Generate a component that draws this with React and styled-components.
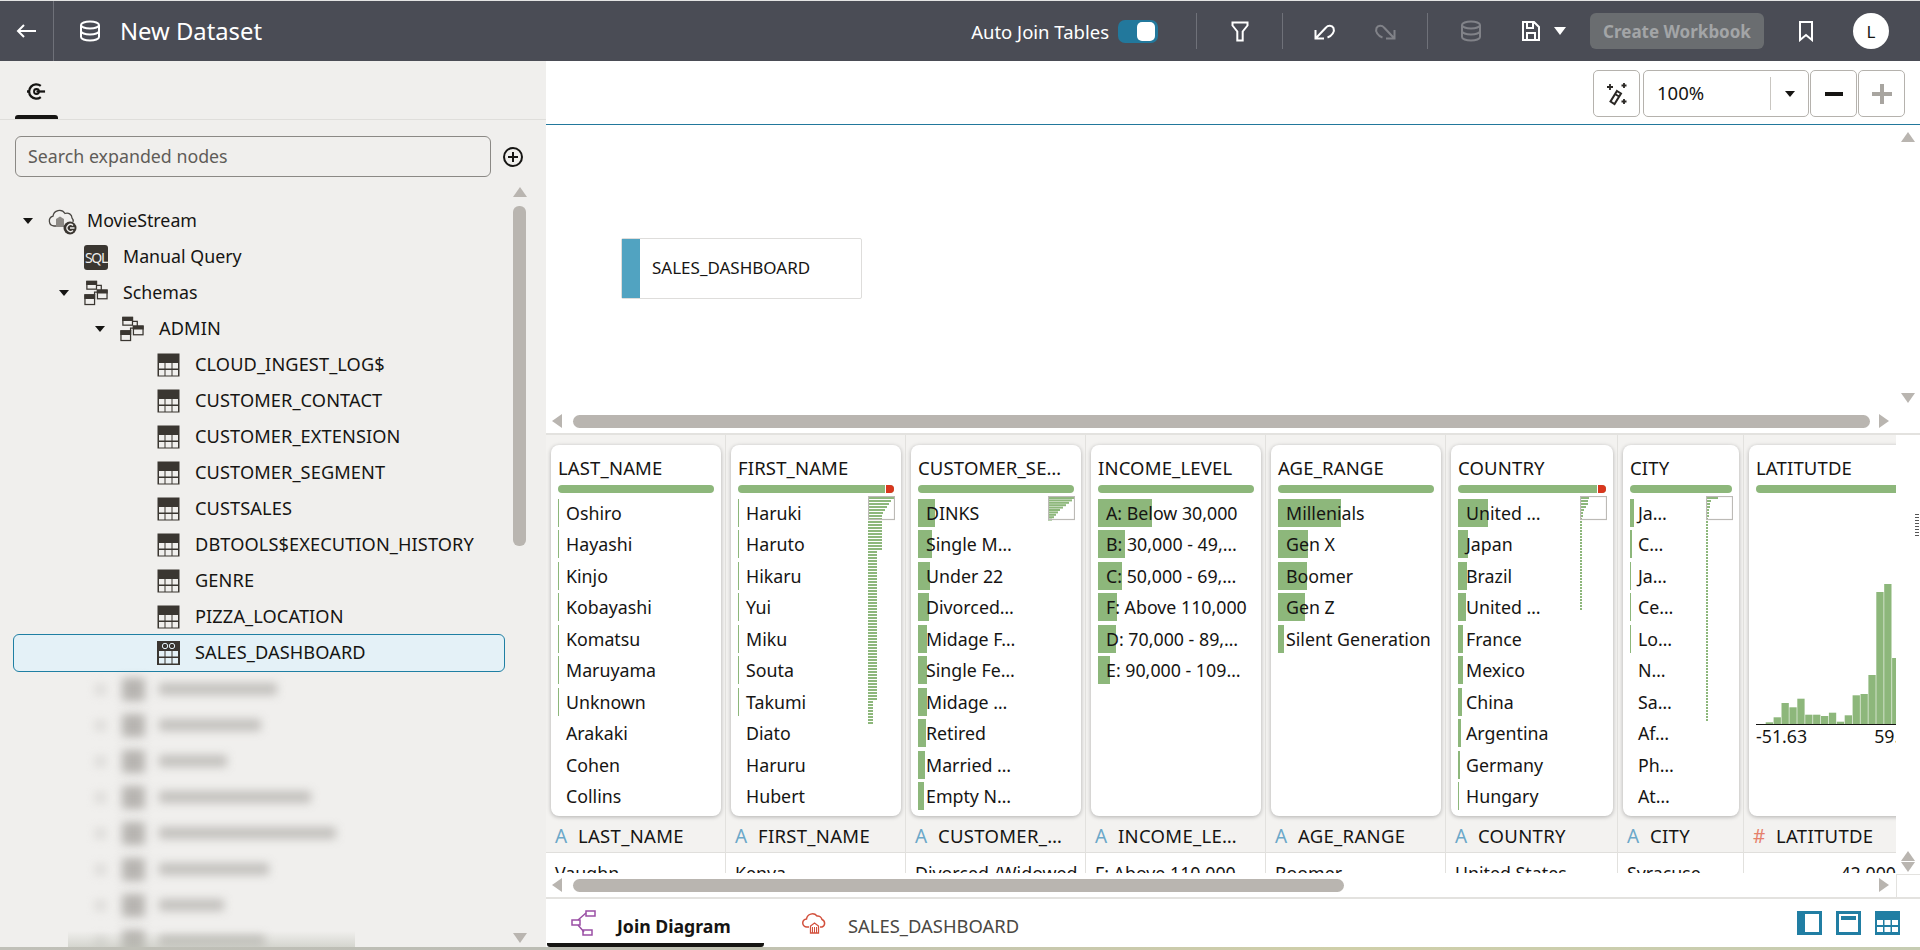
import React from "react"
import styled, { createGlobalStyle } from "styled-components"

const GlobalStyle = createGlobalStyle`
  html, body {
    margin: 0;
    padding: 0;
    background: #fff;
  }
  body {
    font-family: "Noto Sans", "Open Sans", sans-serif;
    color: #161513;
  }
`

const Page = styled.div`
  width: 1920px;
  height: 950px;
  overflow: hidden;
  display: flex;
  flex-direction: column;
  background: #fff;
`

/* header */

const Header = styled.header`
  flex: 0 0 61px;
  box-sizing: border-box;
  border-top: 1px solid #e4e4e4;
  background: #4a4c55;
  display: flex;
  align-items: center;
  color: #fff;
`

const BackCell = styled.div`
  width: 54px;
  height: 100%;
  box-sizing: border-box;
  border-right: 1px solid #6f7179;
  display: flex;
  align-items: center;
  padding-left: 15px;
`

const Title = styled.h1`
  margin: 0 0 0 25px;
  font-size: 23.8px;
  font-weight: 400;
  line-height: 30px;
  flex: 1;
  display: flex;
  align-items: center;
  gap: 19px;
`

const AutoJoin = styled.div`
  display: flex;
  align-items: center;
  gap: 9px;
  font-size: 18.5px;
  margin-right: 38px;
  white-space: nowrap;
`

const Toggle = styled.div`
  width: 40px;
  height: 23px;
  border-radius: 7px;
  background: #22789c;
  display: flex;
  align-items: center;
  justify-content: flex-end;
  padding-right: 3px;
  box-sizing: border-box;
`

const ToggleKnob = styled.div`
  width: 18px;
  height: 19px;
  border-radius: 5px;
  background: #fff;
`

const HeaderRule = styled.div`
  width: 1px;
  height: 36px;
  background: #6f7179;
`

const HeaderIcon = styled.div`
  display: flex;
  align-items: center;
  justify-content: center;
  flex: 0 0 ${(p) => p.$w}px;
  opacity: ${(p) => (p.$off ? 0.3 : 1)};
`

const CreateButton = styled.div`
  width: 174px;
  height: 36px;
  border-radius: 6px;
  background: #6a6d70;
  color: #a3a5a7;
  font-size: 17px;
  font-weight: 700;
  display: flex;
  align-items: center;
  justify-content: center;
  white-space: nowrap;
`

const Avatar = styled.div`
  width: 36px;
  height: 36px;
  border-radius: 50%;
  background: #fff;
  color: #161513;
  font-size: 17px;
  display: flex;
  align-items: center;
  justify-content: center;
  margin: 0 31px 0 0;
`

const DownCaret = styled.span`
  border-left: 6.5px solid transparent;
  border-right: 6.5px solid transparent;
  border-top: 8px solid #fff;
  margin-left: 13px;
`

/* main */

const Body = styled.div`
  flex: 1;
  min-height: 0;
  display: flex;
`

const LeftPanel = styled.aside`
  position: relative;
  flex: 0 0 546px;
  background: #f0efed;
  display: flex;
  flex-direction: column;
  overflow: hidden;
`

const TabRow = styled.div`
  flex: 0 0 58px;
  box-sizing: border-box;
  border-bottom: 1px solid #dfdedb;
  padding-left: 15px;
  display: flex;
`

const SideTab = styled.div`
  position: relative;
  width: 43px;
  height: 58px;
  box-sizing: border-box;
  display: flex;
  align-items: center;
  justify-content: center;
  padding-top: 2px;

  &::after {
    content: "";
    position: absolute;
    left: 0;
    right: 0;
    bottom: 0;
    height: 4px;
    background: #161513;
    border-radius: 3px 3px 0 0;
  }
`

const SearchRow = styled.div`
  display: flex;
  align-items: center;
  gap: 11px;
  padding: 16px 0 0 15px;
`

const SearchInput = styled.input`
  width: 476px;
  height: 41px;
  box-sizing: border-box;
  border: 1px solid #8b8985;
  border-radius: 6px;
  background: #f0efed;
  padding: 0 12px 2px;
  font: 400 17.8px "Noto Sans", sans-serif;

  &::placeholder {
    color: #5f5c58;
    opacity: 1;
  }
`

const TreeArea = styled.div`
  flex: 1;
  min-height: 0;
  display: flex;
  padding-top: 10px;
`

const TreeList = styled.ul`
  list-style: none;
  margin: 16px 0 0 13px;
  padding: 0;
  width: 492px;
`

const TreeRow = styled.li`
  height: 36px;
  box-sizing: border-box;
  display: flex;
  align-items: center;
  padding-left: ${(p) => 10 + p.$level * 36}px;
  font-size: ${(p) => (p.$caps ? "18.2px" : "17.8px")};
  letter-spacing: ${(p) => (p.$caps ? "0.1px" : "0")};
  white-space: nowrap;
  ${(p) =>
    p.$selected &&
    `
    height: 38px;
    margin: -1px 0;
    position: relative;
    background: #e4f1f7;
    border: 1px solid #1f7fa3;
    border-radius: 6px;
    padding-left: ${9 + p.$level * 36}px;
  `}
`

const RowLabel = styled.span`
  margin-top: -2px;
`

const Caret = styled.span`
  width: 0;
  height: 0;
  flex: 0 0 auto;
  margin-right: 15px;
  border-left: 5.5px solid transparent;
  border-right: 5.5px solid transparent;
  border-top: 6px solid #161513;
  visibility: ${(p) => (p.$hidden ? "hidden" : "visible")};
`

const IconSlot = styled.span`
  width: 24px;
  flex: 0 0 24px;
  display: flex;
  align-items: center;
  justify-content: center;
  margin-right: 15px;
`

const CloudSlot = styled(IconSlot)`
  width: 30px;
  flex: 0 0 30px;
  margin-right: 9px;
`

const SqlBadge = styled.span`
  width: 24px;
  height: 25px;
  border-radius: 3px;
  background: #3a3631;
  color: #f0efed;
  font-size: 14px;
  line-height: 25px;
  text-align: center;
  letter-spacing: -1.3px;
`

const BlurRow = styled.li`
  height: 36px;
  display: flex;
  align-items: center;
  padding-left: 82px;
  filter: blur(5px);
  opacity: 0.8;
`

const BlurCaret = styled.span`
  width: 11px;
  height: 11px;
  background: #d6d4d1;
  margin-right: 16px;
`

const BlurIcon = styled.span`
  width: 23px;
  height: 23px;
  background: #a9a6a2;
  margin-right: 14px;
`

const BlurText = styled.span`
  height: 12px;
  background: #b7b5b1;
`

const BottomShade = styled.div`
  position: absolute;
  left: 68px;
  bottom: 0;
  width: 287px;
  height: 16px;
  background: linear-gradient(rgba(190, 192, 182, 0), rgba(190, 192, 182, 0.55));
`

const TreeScroll = styled.div`
  width: 13px;
  margin: 0 0 0 8px;
  display: flex;
  flex-direction: column;
  align-items: center;
`

const VThumb = styled.div`
  width: 13px;
  height: 340px;
  margin-top: 9px;
  border-radius: 6px;
  background: #b9b5b0;
  flex: 0 0 auto;
`

const Arrow = styled.span`
  display: block;
  width: 0;
  height: 0;
  flex: 0 0 auto;
  border-style: solid;
  border-color: transparent;
  ${(p) =>
    p.$dir === "up" &&
    "border-width: 0 7px 10px; border-bottom-color: #b9b5b0;"}
  ${(p) =>
    p.$dir === "down" &&
    "border-width: 10px 7px 0; border-top-color: #b9b5b0;"}
  ${(p) =>
    p.$dir === "left" &&
    "border-width: 7px 10px 7px 0; border-right-color: #b9b5b0;"}
  ${(p) =>
    p.$dir === "right" &&
    "border-width: 7px 0 7px 10px; border-left-color: #b9b5b0;"}
`

const PushDown = styled.div`
  flex: 1;
`

const TreeEnd = styled.div`
  height: 4px;
`

const RightPanel = styled.main`
  flex: 1;
  min-width: 0;
  display: flex;
  flex-direction: column;
`

const ToolBar = styled.div`
  flex: 0 0 64px;
  box-sizing: border-box;
  border-bottom: 1px solid #22789c;
  display: flex;
  align-items: center;
  justify-content: flex-end;
  gap: 1px;
  padding: 2px 15px 0 0;
`

const ToolButton = styled.div`
  width: 47px;
  height: 47px;
  box-sizing: border-box;
  border: 1px solid #b5b2ad;
  border-radius: 5px;
  display: flex;
  align-items: center;
  justify-content: center;
  margin-right: ${(p) => p.$gap || 0}px;
`

const ZoomSelect = styled.div`
  width: 166px;
  height: 47px;
  box-sizing: border-box;
  border: 1px solid #b5b2ad;
  border-radius: 5px;
  display: flex;
  align-items: center;
  font-size: 18.5px;
  padding-left: 13px;
`

const ZoomValue = styled.span`
  width: 113px;
  padding-bottom: 2px;
`

const ZoomCaret = styled.span`
  flex: 1;
  height: 33px;
  border-left: 1px solid #c9c6c1;
  display: flex;
  align-items: center;
  justify-content: center;

  &::after {
    content: "";
    border-left: 5px solid transparent;
    border-right: 5px solid transparent;
    border-top: 6px solid #161513;
  }
`

const Diagram = styled.section`
  flex: 0 0 308px;
  display: grid;
  grid-template-columns: 1350px 24px;
  grid-template-rows: 1fr 19px;
`

const Canvas = styled.div`
  grid-column: 1;
  grid-row: 1;
  padding: 113px 0 0 75px;
`

const TableNode = styled.div`
  width: 241px;
  height: 61px;
  box-sizing: border-box;
  border: 1px solid #dedddb;
  border-radius: 2px;
  display: flex;
  align-items: center;
  font-size: 17px;
  background: #fff;
`

const NodeStripe = styled.span`
  width: 18px;
  height: 100%;
  background: #51a3c1;
  margin-right: 12px;
`

const VTrack = styled.div`
  grid-column: 2;
  grid-row: 1 / 3;
  display: flex;
  flex-direction: column;
  align-items: center;
  justify-content: space-between;
  padding: 7px 0 30px;
  box-sizing: border-box;
`

const HBar = styled.div`
  display: flex;
  align-items: center;
  padding: 0 7px ${(p) => p.$pb || 0}px 6px;
  box-sizing: border-box;
`

const HThumb = styled.div`
  width: ${(p) => p.$w}px;
  height: 13px;
  border-radius: 6.5px;
  background: #b9b5b0;
  margin: 0 9px 0 11px;
`

const HSpacer = styled.div`
  flex: 1;
`

const DataArea = styled.section`
  flex: 1;
  min-height: 0;
  border-top: 2px solid #e3e2df;
  border-bottom: 2px solid #e3e2df;
  display: grid;
  grid-template-columns: 1350px 24px;
  grid-template-rows: 1fr 24px;
`

const Columns = styled.div`
  display: flex;
  overflow: hidden;
`

const Column = styled.div`
  flex: 0 0 auto;
  border-right: 1px solid #e2e1de;
  display: flex;
  flex-direction: column;
`

const CardSlot = styled.div`
  background: #f3f2f0;
  padding: 10px 4px 0 5px;
`

const Card = styled.div`
  position: relative;
  width: ${(p) => p.$w}px;
  height: 371px;
  box-sizing: border-box;
  padding: 0 7px;
  background: #fff;
  border-radius: 8px;
  box-shadow: 0 1px 4px rgba(0, 0, 0, 0.28);
  overflow: hidden;
`

const CardTitle = styled.div`
  height: 40px;
  padding-top: 11px;
  box-sizing: border-box;
  font-size: 18.5px;
  letter-spacing: 0.15px;
  line-height: 24px;
  white-space: nowrap;
`

const Quality = styled.div`
  height: 8px;
  border-radius: 4px;
  background: #8db77b;
  display: flex;
  justify-content: flex-end;
  overflow: hidden;
  margin-bottom: 6px;
  width: ${(p) => (p.$wide ? "300px" : "auto")};
`

const QualityBad = styled.span`
  width: 8px;
  height: 100%;
  background: #d9361e;
  border-left: 1px solid #fff;
`

const Value = styled.div`
  position: relative;
  height: 31.44px;
  box-sizing: border-box;
  padding: 1px 0 0 8px;
  font-size: 17.8px;
  line-height: 26px;
  white-space: nowrap;
`

const ValueBar = styled.span`
  position: absolute;
  left: 0;
  top: 0;
  height: 28px;
  background: #8db77b;
`

const ValueText = styled.span`
  position: relative;
`

const MiniChart = styled.svg`
  position: absolute;
  right: 6px;
  top: 51px;
`

const Histogram = styled.svg`
  display: block;
`

const AxisLabels = styled.div`
  display: flex;
  gap: 67px;
  font-size: 17.8px;
  line-height: 22px;
`

const HeadCell = styled.div`
  height: 37px;
  box-sizing: border-box;
  padding: 3px 0 0 9px;
  background: #f3f2f0;
  border-bottom: 1px solid #e0dfdc;
  display: flex;
  align-items: center;
  gap: 10px;
  font-size: 18.5px;
  letter-spacing: 0.3px;
  white-space: nowrap;
`

const TypeMark = styled.span`
  width: 13px;
  font-size: 19px;
  line-height: 20px;
  color: ${(p) => (p.$num ? "#e5806a" : "#6ba8c9")};
`

const DataCell = styled.div`
  height: 20px;
  overflow: hidden;
  padding: 8px ${(p) => p.$pr || 0}px 0 9px;
  font-size: 17.8px;
  line-height: 24px;
  white-space: nowrap;
  text-align: ${(p) => (p.$right ? "right" : "left")};
  box-sizing: border-box;
`

const SideGutter = styled.div`
  position: relative;
  display: flex;
  flex-direction: column;
  align-items: center;
  justify-content: flex-end;
  gap: 1px;
  padding-bottom: 1px;
`

const ResizeGrip = styled.span`
  position: absolute;
  right: 1px;
  top: 79px;
  width: 4px;
  height: 22px;
  background: repeating-linear-gradient(#555 0 1px, transparent 1px 3px);
`

const CornerBox = styled.div`
  border-top: 1px solid #e3e2df;
  border-left: 1px solid #e3e2df;
  margin-top: 1px;
`

const TabBar = styled.nav`
  flex: 0 0 48px;
  display: flex;
  align-items: stretch;
  padding: 0 20px 0 1px;
`

const BottomTab = styled.div`
  width: ${(p) => p.$w}px;
  box-sizing: border-box;
  display: flex;
  align-items: center;
  gap: 21px;
  padding: 9px 0 ${(p) => (p.$active ? "0" : "4px")} ${(p) => p.$pad}px;
  font-size: ${(p) => (p.$active ? "17.7px" : "18.4px")};
  font-weight: ${(p) => (p.$active ? 700 : 400)};
  color: ${(p) => (p.$active ? "#161513" : "#4b4843")};
  border-bottom: ${(p) => (p.$active ? "4px solid #161513" : "none")};
  border-radius: 0 0 3px 3px;
  white-space: nowrap;
`

const TabIcon = styled.span`
  display: flex;
  margin-top: -5px;
`

const ViewIcons = styled.div`
  margin-left: auto;
  display: flex;
  align-items: center;
  gap: 14px;
  padding-bottom: 1px;
`

const BottomStrip = styled.div`
  flex: 0 0 3px;
  background: linear-gradient(90deg, #c0c0b8 0, #bcbdb4 28%, #cfcfa9 70%, #c6ccb2 100%);
`

/* icons */

const Stroke = ({ w, h, color = "#fff", sw = 2, children }) => (
  <svg width={w} height={h} viewBox={`0 0 ${w} ${h}`} fill="none" stroke={color} strokeWidth={sw}>
    {children}
  </svg>
)

const BackIcon = () => (
  <Stroke w={22} h={16}>
    <path d="M21 8H3M9 2L3 8l6 6" />
  </Stroke>
)

const DbIcon = () => (
  <Stroke w={22} h={22}>
    <ellipse cx="11" cy="5" rx="9" ry="3.6" />
    <path d="M2 5v12c0 2 4 3.6 9 3.6s9-1.6 9-3.6V5M2 11c0 2 4 3.6 9 3.6s9-1.6 9-3.6" />
  </Stroke>
)

const FilterIcon = () => (
  <Stroke w={18} h={21}>
    <path d="M1.5 1.5h15v3l-4.8 6v9h-5.4v-9l-4.8-6z" />
  </Stroke>
)

const UndoIcon = () => (
  <Stroke w={22} h={17}>
    <path d="M1.5 7v8.5h8.5M2.5 14.5L12 4.5c2-2.5 6-2.500 7.500.5 1.500 3.500-1.500 8-6 9.500" />
  </Stroke>
)

const RedoIcon = () => (
  <Stroke w={22} h={17}>
    <path d="M20.5 7v8.5h-8.5M19.5 14.5L10 4.5C8 2 4 2 2.5 5c-1.5 3.5 1.5 8 6 9.5" />
  </Stroke>
)

const SaveIcon = () => (
  <Stroke w={20} h={22}>
    <path d="M2 2h11l5 5v13H2zM6 2v6h6V2M6 20v-7h8v7" />
  </Stroke>
)

const BookmarkIcon = () => (
  <Stroke w={16} h={22}>
    <path d="M2 2h12v18l-6-5-6 5z" />
  </Stroke>
)

const SourceIcon = () => (
  <svg width="19" height="19" viewBox="0 0 20 20" fill="none" stroke="#161513" strokeWidth="2.4">
    <path d="M14.5 4.2A7.5 7.5 0 1 0 14.5 15.8" />
    <path d="M10 10h9" />
    <circle cx="10" cy="10" r="2.6" strokeWidth="2" />
    <path d="M2 10H0" />
  </svg>
)

const AddIcon = () => (
  <Stroke w={22} h={22} color="#161513">
    <circle cx="11" cy="11" r="9" />
    <path d="M11 6v10M6 11h10" />
  </Stroke>
)

const CloudIcon = () => (
  <svg width="30" height="27" viewBox="0 0 30 27" fill="none">
    <path
      d="M8 18H6a5 5 0 0 1-1-9.8A6.5 6.5 0 0 1 17 5.5 5 5 0 0 1 24 10a4 4 0 0 1 1 4"
      stroke="#4a4743"
      strokeWidth="1.3"
    />
    <path d="M8 11l4-2.5 4 2.5v8H8z" fill="#8c8985" />
    <circle cx="22" cy="20" r="6.5" fill="#3a3631" />
    <path d="M25 17.5a3.5 3.5 0 1 0 0 5M22 20h4.5" stroke="#f0efed" strokeWidth="1.3" />
  </svg>
)

const SchemaIcon = () => (
  <svg width="25" height="26" viewBox="0 0 25 26" fill="none" stroke="#3a3631" strokeWidth="1.3">
    <rect x="3" y="1" width="10" height="8" />
    <path d="M3 1h10v3H3z" fill="#3a3631" />
    <rect x="14" y="10" width="10" height="9" />
    <path d="M14 10h10v3H14z" fill="#3a3631" />
    <rect x="1" y="15" width="10" height="10" />
    <path d="M1 15h10v3.5H1z" fill="#3a3631" />
    <path d="M13 5h5v5M11 15v-3h3" />
  </svg>
)

const TableIcon = () => (
  <svg width="23" height="24" viewBox="0 0 23 24" fill="none">
    <rect x="0.5" y="0.5" width="22" height="23" fill="#3a3631" />
    <path d="M2 10h5.5v5.5H2zM8.500 10h6v5.5h-6zM15.5 10H21v5.5h-5.5zM2 17h5.5v5.5H2zM8.5 17h6v5.5h-6zM15.5 17H21v5.5h-5.5z" fill="#f0efed" />
  </svg>
)

const ViewIcon = () => (
  <svg width="23" height="24" viewBox="0 0 23 24" fill="none" stroke="#3a3631">
    <rect x="0.5" y="0.5" width="22" height="23" fill="#3a3631" />
    <path d="M2 10h5.5v5.5H2zM8.5 10h6v5.5h-6zM15.5 10H21v5.5h-5.5zM2 17h5.5v5.5H2zM8.5 17h6v5.5h-6zM15.5 17H21v5.5h-5.5z" fill="#e4f1f7" stroke="none" />
    <circle cx="8" cy="5" r="2.7" stroke="#e4f1f7" />
    <circle cx="15" cy="5" r="2.7" stroke="#e4f1f7" />
  </svg>
)

const WandIcon = () => (
  <svg width="24" height="26" viewBox="0 0 24 26" fill="none" stroke="#2a2724" strokeWidth="2">
    <path d="M12 10l4 2.5-6.5 10.5-4-2.5zM10 13l4 2.5" />
    <path d="M5 3v6M2 6h6M19 2v5M16.5 4.5h5M19 18v5M16.5 20.5h5" strokeWidth="1.8" />
  </svg>
)

const JoinIcon = () => (
  <svg width="25" height="26" viewBox="0 0 25 26" fill="none" stroke="#9a4fa5" strokeWidth="1.5">
    <rect x="1" y="10" width="8" height="5" />
    <rect x="15" y="1" width="9" height="5" />
    <rect x="12" y="20" width="9" height="5" />
    <path d="M7 10l8-7M7 15l6 7" />
  </svg>
)

const CloudTabIcon = () => (
  <svg width="25" height="22" viewBox="0 0 25 22" fill="none">
    <path d="M7 15H5a4 4 0 0 1-.5-8A6 6 0 0 1 15 4a4.5 4.5 0 0 1 5 3.5 4 4 0 0 1 0 7.5h-2" stroke="#d2503c" strokeWidth="1.5" />
    <path d="M8.5 21v-7l4-3 4 3v7z" stroke="#d2503c" strokeWidth="1.3" />
    <path d="M10.5 15v6M12.5 15v6M14.5 15v6" stroke="#d2503c" />
  </svg>
)

const PanelIcon = ({ kind }) => (
  <svg width="25" height="24" viewBox="0 0 25 24">
    <rect width="25" height="24" fill="#217ea3" />
    {kind === "left" && <rect x="8" y="3" width="14" height="18" fill="#fff" />}
    {kind === "top" && (
      <>
        <rect x="3" y="3" width="19" height="18" fill="#fff" />
        <rect x="5" y="5" width="15" height="4" fill="#217ea3" />
      </>
    )}
    {kind === "grid" && (
      <path d="M2 9h6v5H2zM9.5 9h6v5h-6zM17 9h6v5h-6zM2 16h6v5H2zM9.5 16h6v5h-6zM17 16h6v5h-6z" fill="#fff" />
    )}
  </svg>
)

/* mini overview chart, thin bars sorted by count */
const MiniOverview = ({ widths, pitch = 3, bar = 2 }) => {
  const height = Math.ceil(widths.length * pitch) + 2
  return (
    <MiniChart width="27" height={height} viewBox={`0 0 27 ${height}`}>
      {widths.map((w, i) => (
        <rect key={i} x="0" y={1 + i * pitch} width={w} height={bar} fill="#8db77b" />
      ))}
      <rect x="0.5" y="0.5" width="26" height="23" fill="none" stroke="#bcbab6" strokeWidth="1.2" />
    </MiniChart>
  )
}

const repeat = (w, n) => Array.from({ length: n }, () => w)

const firstNameBars = [26, 23, 21, 19, 17, 15, 14, ...repeat(14, 11), ...repeat(9, 50), ...repeat(5, 8)]
const segmentBars = [26, 24, 21, 18, 15, 12, 10, 8, 6, 4]
const countryBars = [9, 8, 8, 6, 4, 3, 3, 2, ...repeat(2, 30)]
const cityBars = [12, 5, 4, 4, 3, 3, 3, 2, ...repeat(2, 67)]

const latitudeHeights = [1.7, 6.7, 21, 16.7, 25.3, 9.3, 9.3, 8, 11.3, 2.3, 8.7, 28.7, 30, 49, 132, 140, 66]

const columns = [
  {
    name: "LAST_NAME",
    head: "LAST_NAME",
    width: 170,
    cell: "Vaughn",
    values: [
      ["Oshiro", 1], ["Hayashi", 1], ["Kinjo", 1], ["Kobayashi", 1], ["Komatsu", 1],
      ["Maruyama", 1], ["Unknown", 1], ["Arakaki", 0], ["Cohen", 0], ["Collins", 0],
    ],
  },
  {
    name: "FIRST_NAME",
    head: "FIRST_NAME",
    width: 170,
    cell: "Kenya",
    bad: true,
    mini: firstNameBars,
    values: [
      ["Haruki", 1], ["Haruto", 1], ["Hikaru", 1], ["Yui", 1], ["Miku", 1],
      ["Souta", 1], ["Takumi", 1], ["Diato", 0], ["Haruru", 0], ["Hubert", 0],
    ],
  },
  {
    name: "CUSTOMER_SE…",
    head: "CUSTOMER_…",
    width: 170,
    cell: "Divorced /Widowed",
    mini: segmentBars,
    miniPitch: 2.4,
    values: [
      ["DINKS", 17], ["Single M…", 14], ["Under 22", 12], ["Divorced…", 11], ["Midage F…", 9],
      ["Single Fe…", 9], ["Midage …", 9], ["Retired", 8], ["Married …", 7], ["Empty N…", 6],
    ],
  },
  {
    name: "INCOME_LEVEL",
    head: "INCOME_LE…",
    width: 170,
    cell: "F: Above 110,000",
    values: [
      ["A: Below 30,000", 54], ["B: 30,000 - 49,…", 27], ["C: 50,000 - 69,…", 24],
      ["F: Above 110,000", 19], ["D: 70,000 - 89,…", 18], ["E: 90,000 - 109…", 12],
    ],
  },
  {
    name: "AGE_RANGE",
    head: "AGE_RANGE",
    width: 170,
    cell: "Boomer",
    values: [
      ["Millenials", 63], ["Gen X", 30], ["Boomer", 29], ["Gen Z", 27], ["Silent Generation", 6],
    ],
  },
  {
    name: "COUNTRY",
    head: "COUNTRY",
    width: 162,
    cell: "United States",
    bad: true,
    mini: countryBars,
    values: [
      ["United …", 30], ["Japan", 10], ["Brazil", 9], ["United …", 8], ["France", 5],
      ["Mexico", 5], ["China", 4], ["Argentina", 3], ["Germany", 2], ["Hungary", 1],
    ],
  },
  {
    name: "CITY",
    head: "CITY",
    width: 116,
    cell: "Syracuse",
    mini: cityBars,
    values: [
      ["Ja…", 4], ["C…", 2], ["Ja…", 1], ["Ce…", 1], ["Lo…", 1],
      ["N…", 0], ["Sa…", 0], ["Af…", 0], ["Ph…", 0], ["At…", 0],
    ],
  },
  {
    name: "LATITUTDE",
    head: "LATITUTDE",
    width: 220,
    cell: "42.000",
    numeric: true,
  },
]

const tables = [
  "CLOUD_INGEST_LOG$",
  "CUSTOMER_CONTACT",
  "CUSTOMER_EXTENSION",
  "CUSTOMER_SEGMENT",
  "CUSTSALES",
  "DBTOOLS$EXECUTION_HISTORY",
  "GENRE",
  "PIZZA_LOCATION",
]

const blurredWidths = [118, 102, 68, 152, 177, 110, 65, 106]

const LatitudeChart = () => (
  <>
    <Histogram width="206" height="226" viewBox="0 0 206 226">
      {latitudeHeights.map((h, i) => (
        <rect key={i} x={9.7 + i * 7.9} y={225 - h} width="7.3" height={h} fill="#8db77b" />
      ))}
      <rect x="0" y="225" width="206" height="1" fill="#161513" />
    </Histogram>
    <AxisLabels>
      <span>-51.63</span>
      <span>59.34</span>
    </AxisLabels>
  </>
)

const App = () => {
  return (
    <Page>
      <GlobalStyle />
      <Header>
        <BackCell>
          <BackIcon />
        </BackCell>
        <Title>
          <DbIcon />
          New Dataset
        </Title>
        <AutoJoin>
          Auto Join Tables
          <Toggle>
            <ToggleKnob />
          </Toggle>
        </AutoJoin>
        <HeaderRule />
        <HeaderIcon $w={85}>
          <FilterIcon />
        </HeaderIcon>
        <HeaderRule />
        <HeaderIcon $w={84}>
          <UndoIcon />
        </HeaderIcon>
        <HeaderIcon $w={36} $off>
          <RedoIcon />
        </HeaderIcon>
        <HeaderIcon $w={24} />
        <HeaderRule />
        <HeaderIcon $w={86} $off>
          <DbIcon />
        </HeaderIcon>
        <HeaderIcon $w={58}>
          <SaveIcon />
          <DownCaret />
        </HeaderIcon>
        <HeaderIcon $w={18} />
        <CreateButton>Create Workbook</CreateButton>
        <HeaderIcon $w={84}>
          <BookmarkIcon />
        </HeaderIcon>
        <HeaderIcon $w={5} />
        <Avatar>L</Avatar>
      </Header>
      <Body>
        <LeftPanel>
          <TabRow>
            <SideTab>
              <SourceIcon />
            </SideTab>
          </TabRow>
          <SearchRow>
            <SearchInput placeholder="Search expanded nodes" readOnly />
            <AddIcon />
          </SearchRow>
          <TreeArea>
            <TreeList>
              <TreeRow $level={0}>
                <Caret />
                <CloudSlot>
                  <CloudIcon />
                </CloudSlot>
                <RowLabel>MovieStream</RowLabel>
              </TreeRow>
              <TreeRow $level={1}>
                <Caret $hidden />
                <IconSlot>
                  <SqlBadge>SQL</SqlBadge>
                </IconSlot>
                <RowLabel>Manual Query</RowLabel>
              </TreeRow>
              <TreeRow $level={1}>
                <Caret />
                <IconSlot>
                  <SchemaIcon />
                </IconSlot>
                <RowLabel>Schemas</RowLabel>
              </TreeRow>
              <TreeRow $level={2} $caps>
                <Caret />
                <IconSlot>
                  <SchemaIcon />
                </IconSlot>
                <RowLabel>ADMIN</RowLabel>
              </TreeRow>
              {tables.map((name) => (
                <TreeRow key={name} $level={3} $caps>
                  <Caret $hidden />
                  <IconSlot>
                    <TableIcon />
                  </IconSlot>
                  <RowLabel>{name}</RowLabel>
                </TreeRow>
              ))}
              <TreeRow $level={3} $selected $caps>
                <Caret $hidden />
                <IconSlot>
                  <ViewIcon />
                </IconSlot>
                <RowLabel>SALES_DASHBOARD</RowLabel>
              </TreeRow>
              {blurredWidths.map((w, i) => (
                <BlurRow key={i}>
                  <BlurCaret />
                  <BlurIcon />
                  <BlurText style={{ width: w }} />
                </BlurRow>
              ))}
            </TreeList>
            <TreeScroll>
              <Arrow $dir="up" />
              <VThumb />
              <PushDown />
              <Arrow $dir="down" />
              <TreeEnd />
            </TreeScroll>
          </TreeArea>
          <BottomShade />
        </LeftPanel>
        <RightPanel>
          <ToolBar>
            <ToolButton $gap={2}>
              <WandIcon />
            </ToolButton>
            <ZoomSelect>
              <ZoomValue>100%</ZoomValue>
              <ZoomCaret />
            </ZoomSelect>
            <ToolButton>
              <Stroke w={18} h={18} color="#161513" sw={4}>
                <path d="M0 9h18" />
              </Stroke>
            </ToolButton>
            <ToolButton>
              <Stroke w={20} h={20} color="#a8a5a0" sw={4}>
                <path d="M0 10h20M10 0v20" />
              </Stroke>
            </ToolButton>
          </ToolBar>
          <Diagram>
            <Canvas>
              <TableNode>
                <NodeStripe />
                <RowLabel>SALES_DASHBOARD</RowLabel>
              </TableNode>
            </Canvas>
            <VTrack>
              <Arrow $dir="up" />
              <Arrow $dir="down" />
            </VTrack>
            <HBar $pb={5}>
              <Arrow $dir="left" />
              <HThumb $w={1297} />
              <Arrow $dir="right" />
            </HBar>
          </Diagram>
          <DataArea>
            <Columns>
              {columns.map((col) => (
                <Column key={col.name}>
                  <CardSlot>
                    <Card $w={col.width}>
                      <CardTitle>{col.name}</CardTitle>
                      <Quality $wide={col.numeric}>{col.bad && <QualityBad />}</Quality>
                      {col.numeric ? (
                        <LatitudeChart />
                      ) : (
                        col.values.map(([text, w], i) => (
                          <Value key={i}>
                            {w > 0 && <ValueBar style={{ width: w }} />}
                            <ValueText>{text}</ValueText>
                          </Value>
                        ))
                      )}
                      {col.mini && <MiniOverview widths={col.mini} pitch={col.miniPitch} />}
                    </Card>
                  </CardSlot>
                  <HeadCell>
                    <TypeMark $num={col.numeric}>{col.numeric ? "#" : "A"}</TypeMark>
                    {col.head}
                  </HeadCell>
                  <DataCell $right={col.numeric} $pr={col.numeric ? 77 : 0}>
                    {col.cell}
                  </DataCell>
                </Column>
              ))}
            </Columns>
            <SideGutter>
              <ResizeGrip />
              <Arrow $dir="up" />
              <Arrow $dir="down" />
            </SideGutter>
            <HBar>
              <Arrow $dir="left" />
              <HThumb $w={771} />
              <HSpacer />
              <Arrow $dir="right" />
            </HBar>
            <CornerBox />
          </DataArea>
          <TabBar>
            <BottomTab $active $w={217} $pad={24}>
              <TabIcon>
                <JoinIcon />
              </TabIcon>
              Join Diagram
            </BottomTab>
            <BottomTab $w={300} $pad={38}>
              <TabIcon>
                <CloudTabIcon />
              </TabIcon>
              SALES_DASHBOARD
            </BottomTab>
            <ViewIcons>
              <PanelIcon kind="left" />
              <PanelIcon kind="top" />
              <PanelIcon kind="grid" />
            </ViewIcons>
          </TabBar>
        </RightPanel>
      </Body>
      <BottomStrip />
    </Page>
  )
}

export default App
